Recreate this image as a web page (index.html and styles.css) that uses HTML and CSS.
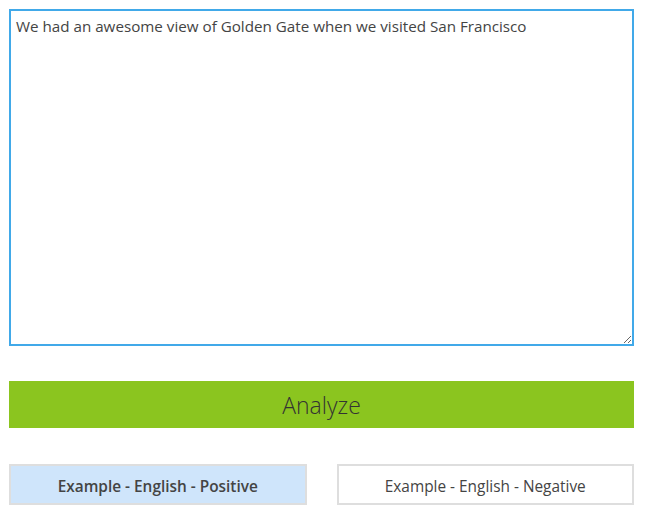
FILE: index.html
```html
<!DOCTYPE html>
<html lang="en">
<head>
  <meta charset="UTF-8" />
  <title>Text Analytics</title>
  <link rel="stylesheet" href="styles.css">
</head>
<body>
  <div class="analyzer">
    <textarea class="input-text" autofocus>We had an awesome view of Golden Gate when we visited San Francisco</textarea>
    <button class="btn-analyze">Analyze</button>
    <div class="examples">
      <button class="example active">Example - English - Positive</button>
      <button class="example">Example - English - Negative</button>
    </div>
  </div>
  <script>
    const ta = document.querySelector('.input-text');
    ta.focus();
    ta.setSelectionRange(ta.value.length, ta.value.length);
  </script>
</body>
</html>
```

FILE: styles.css
```css
* { margin: 0; padding: 0; box-sizing: border-box; }
body {
  font-family: 'Segoe UI', 'Open Sans', sans-serif;
  background: #fff;
  color: #444;
}
.analyzer {
  width: 625px;
  margin: 9px;
  display: flex;
  flex-direction: column;
}
.input-text {
  width: 100%;
  height: 337px;
  border: 2px solid #41a9e9;
  outline: none;
  padding: 5px 5px;
  font-family: 'Open Sans', sans-serif;
  font-size: 15.2px;
  line-height: 21px;
  color: #444;
  resize: both;
  caret-color: #222;
}
.btn-analyze {
  margin-top: 35px;
  height: 47px;
  border: none;
  background: #8bc51f;
  font-family: 'Open Sans', sans-serif;
  font-weight: 300;
  font-size: 23px;
  color: #333;
  cursor: pointer;
}
.examples {
  margin-top: 36px;
  display: flex;
  gap: 30px;
}
.example {
  flex: 1;
  height: 41px;
  padding-top: 3px;
  border: 2px solid #dedede;
  background: #fff;
  font-family: 'Open Sans', sans-serif;
  font-size: 15.4px;
  color: #444;
  cursor: pointer;
}
.example.active {
  background: #cfe5fb;
  font-weight: 600;
}
```
